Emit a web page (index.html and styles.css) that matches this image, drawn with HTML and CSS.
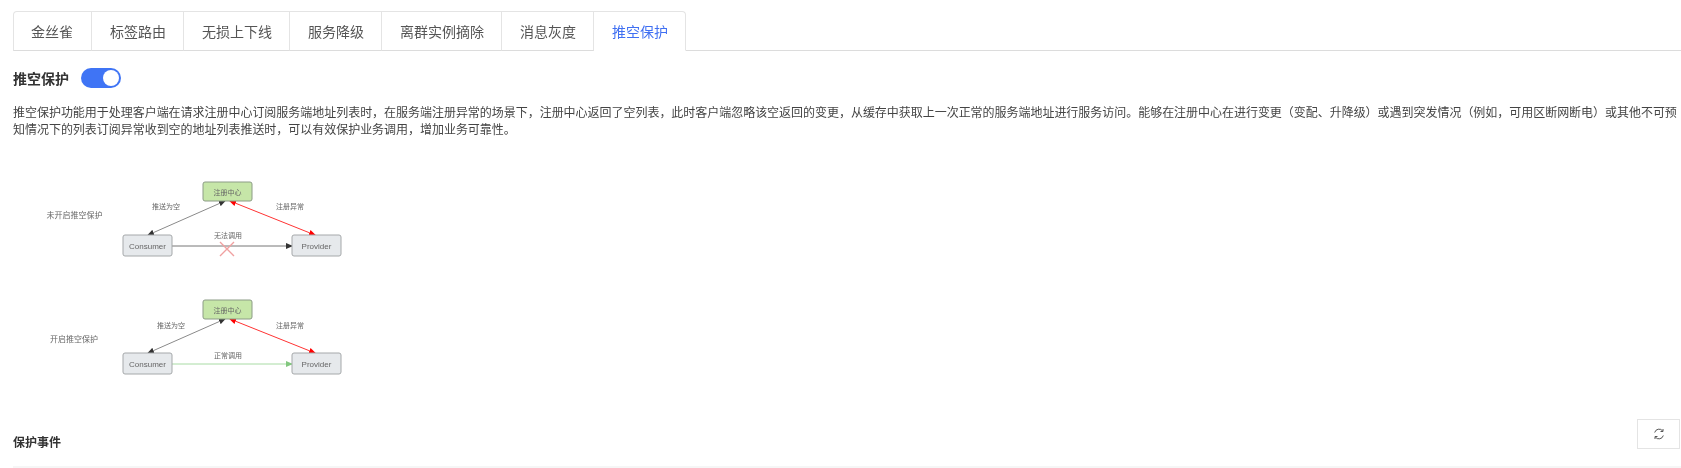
FILE: index.html
```html
<!DOCTYPE html>
<html lang="zh-CN">
<head>
<meta charset="utf-8">
<title>推空保护</title>
<link rel="stylesheet" href="styles.css">
</head>
<body>
<div class="tabs">
  <div class="tab">金丝雀</div>
  <div class="tab">标签路由</div>
  <div class="tab">无损上下线</div>
  <div class="tab">服务降级</div>
  <div class="tab">离群实例摘除</div>
  <div class="tab">消息灰度</div>
  <div class="tab active">推空保护</div>
</div>
<main class="content">
  <div class="title-row">
    <span class="title">推空保护</span>
    <span class="switch"><span class="knob"></span></span>
  </div>
  <p class="desc">推空保护功能用于处理客户端在请求注册中心订阅服务端地址列表时，在服务端注册异常的场景下，注册中心返回了空列表，此时客户端忽略该空返回的变更，从缓存中获取上一次正常的服务端地址进行服务访问。能够在注册中心在进行变更（变配、升降级）或遇到突发情况（例如，可用区断网断电）或其他不可预知情况下的列表订阅异常收到空的地址列表推送时，可以有效保护业务调用，增加业务可靠性。</p>
  <svg class="diagram" width="340" height="232" viewBox="0 0 340 232" xmlns="http://www.w3.org/2000/svg">
    <defs>
      <marker id="ad" markerWidth="7" markerHeight="6" refX="6" refY="3" orient="auto-start-reverse"><path d="M0 0L7 3L0 6Z" fill="#333"/></marker>
      <marker id="ar" markerWidth="7" markerHeight="6" refX="6" refY="3" orient="auto-start-reverse"><path d="M0 0L7 3L0 6Z" fill="#f00"/></marker>
      <marker id="ag" markerWidth="7" markerHeight="6" refX="6" refY="3" orient="auto"><path d="M0 0L7 3L0 6Z" fill="#82c77e"/></marker>
    </defs>
    <g>
      <text class="lbl" x="61.500" y="47.500">未开启推空保护</text>
      <text class="sm" x="139" y="39">推送为空</text>
      <text class="sm" x="263" y="39">注册异常</text>
      <text class="sm" x="201" y="68">无法调用</text>
      <line class="gray" x1="212" y1="31" x2="135" y2="65" marker-start="url(#ad)" marker-end="url(#ad)"/>
      <line class="red" x1="217" y1="31" x2="302" y2="65" marker-start="url(#ar)" marker-end="url(#ar)"/>
      <line class="dark" x1="159" y1="76" x2="279" y2="76" marker-end="url(#ad)"/>
      <path class="cross" d="M207 72L221 86M221 72L207 86"/>
      <rect class="reg" x="190" y="12" width="49" height="19" rx="2"/>
      <text class="sm c" x="214.500" y="24.500">注册中心</text>
      <rect class="node" x="110" y="65" width="49" height="21" rx="2"/>
      <text class="en c" x="134.500" y="78.500">Consumer</text>
      <rect class="node" x="279" y="65" width="49" height="21" rx="2"/>
      <text class="en c" x="303.500" y="78.500">Provider</text>
    </g>
    <g>
      <text class="lbl" x="61" y="171.500">开启推空保护</text>
      <text class="sm" x="144" y="157.500">推送为空</text>
      <text class="sm" x="263" y="157.500">注册异常</text>
      <text class="sm" x="201" y="187.500">正常调用</text>
      <line class="gray" x1="212" y1="149" x2="135" y2="183" marker-start="url(#ad)" marker-end="url(#ad)"/>
      <line class="red" x1="217" y1="149" x2="302" y2="183" marker-start="url(#ar)" marker-end="url(#ar)"/>
      <line class="green" x1="159" y1="194" x2="279" y2="194" marker-end="url(#ag)"/>
      <rect class="reg" x="190" y="130" width="49" height="19" rx="2"/>
      <text class="sm c" x="214.500" y="142.500">注册中心</text>
      <rect class="node" x="110" y="183" width="49" height="21" rx="2"/>
      <text class="en c" x="134.500" y="196.500">Consumer</text>
      <rect class="node" x="279" y="183" width="49" height="21" rx="2"/>
      <text class="en c" x="303.500" y="196.500">Provider</text>
    </g>
  </svg>
  <div class="events-head">
    <span class="events-title">保护事件</span>
    <button class="refresh" type="button" aria-label="刷新">
      <svg width="12" height="12" viewBox="0 0 12 12" fill="none" stroke="#555" stroke-width="1" xmlns="http://www.w3.org/2000/svg"><path d="M1.700 4.500A4.500 4.500 0 0 1 9.700 3"/><path d="M10.300 7.500A4.500 4.500 0 0 1 2.300 9"/><path d="M10 1v2.500H7.500"/><path d="M2 11V8.500h2.500"/></svg>
    </button>
  </div>
  <div class="table-head"></div>
</main>
</body>
</html>
```
FILE: styles.css
```css
* { box-sizing: border-box; }
html, body { margin: 0; height: 468px; overflow: hidden; background: #fff; }
body {
  font-family: "Noto Sans CJK SC", "Liberation Sans", sans-serif;
  color: #333;
  padding-top: 11px;
  filter: blur(0.35px);
}
.tabs {
  display: flex;
  height: 40px;
  margin-left: 13px;
  border-bottom: 1px solid #dcdcdc;
}
.tab {
  height: 40px;
  padding: 0 17px 0 18px;
  font-size: 14px;
  line-height: 39px;
  color: #555;
  background: #fff;
  border: 1px solid #e4e4e4;
  border-left-width: 0;
  border-bottom: 1px solid #dcdcdc;
}
.tab:first-child { border-left-width: 1px; border-top-left-radius: 4px; padding-left: 17px; padding-right: 18px; }
.tab.active {
  color: #3f6ff2;
  border-bottom-color: #fff;
  border-top-right-radius: 4px;
}
.content { padding: 0 1px 0 13px; }
.title-row { display: flex; align-items: center; gap: 12px; height: 20px; margin-top: 17px; }
.title { font-size: 14px; font-weight: 700; color: #333; }
.switch {
  display: flex;
  justify-content: flex-end;
  align-items: center;
  width: 40px;
  height: 20px;
  padding: 2px;
  border-radius: 10px;
  background: #3f74f5;
}
.knob { width: 16px; height: 16px; border-radius: 50%; background: #fff; }
.desc {
  margin: 15px -1px 0 0;
  font-size: 12px;
  line-height: 17px;
  letter-spacing: -0.03px;
  color: #444;
}
.diagram { display: block; margin-top: 33px; filter: blur(0.3px); }
.diagram text { font-family: "Noto Sans CJK SC", "Liberation Sans", sans-serif; fill: #666; }
.lbl { font-size: 8px; text-anchor: middle; }
.sm { font-size: 7px; }
.diagram .c { text-anchor: middle; }
.diagram .en { font-size: 8px; font-family: "Liberation Sans", sans-serif; }
.reg { fill: #c6e6a8; stroke: #8c9c86; stroke-width: 1; }
.node { fill: #e6e9ec; stroke: #a5a8aa; stroke-width: 1; }
.gray { stroke: #8a8a8a; stroke-width: 1; }
.red { stroke: #f33; stroke-width: 1; }
.dark { stroke: #777; stroke-width: 1; }
.green { stroke: #a8dba4; stroke-width: 1; }
.cross { stroke: #f0a0a0; stroke-width: 1.400; fill: none; }
.events-head {
  display: flex;
  justify-content: space-between;
  align-items: center;
  height: 30px;
  margin-top: 17px;
}
.events-title { font-size: 12px; font-weight: 700; color: #333; padding-top: 15px; }
.refresh {
  display: flex;
  align-items: center;
  justify-content: center;
  width: 43px;
  height: 30px;
  padding: 0;
  background: #fff;
  border: 1px solid #e4e4e4;
}
.table-head { height: 4px; margin-top: 17px; margin-right: -1px; background: #f6f6f6; }
```
